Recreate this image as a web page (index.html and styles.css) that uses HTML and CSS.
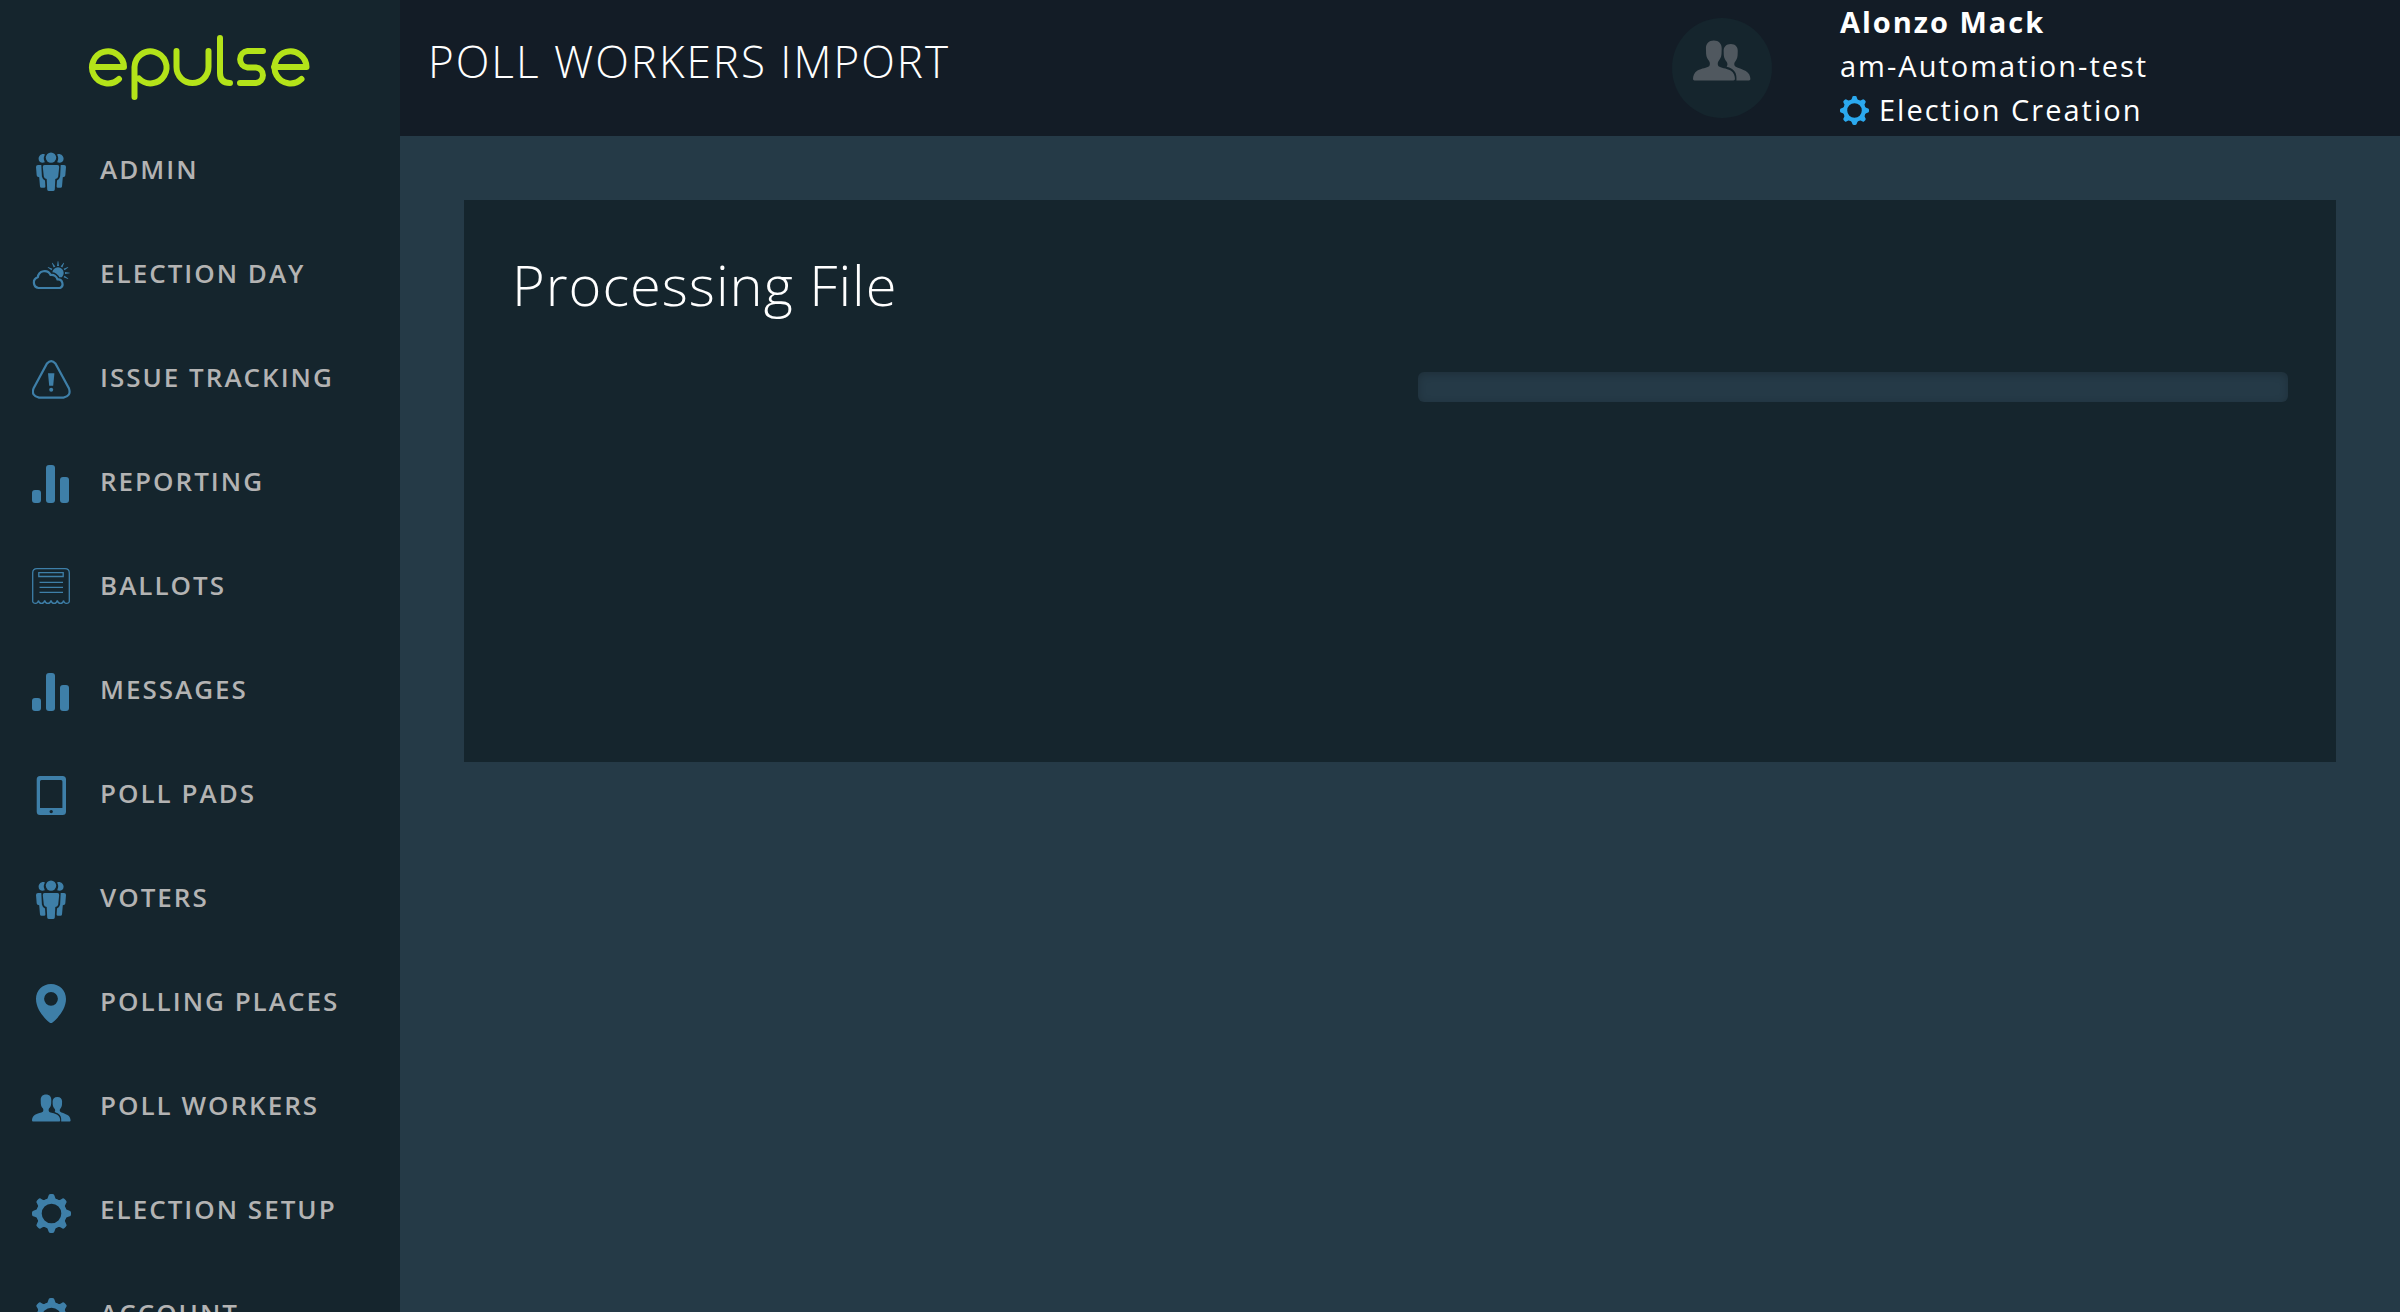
FILE: index.html
```html
<!DOCTYPE html>
<html lang="en">
<head>
<meta charset="utf-8">
<title>Poll Workers Import</title>
<link rel="stylesheet" href="styles.css">
</head>
<body>
<svg class="defs" width="0" height="0" aria-hidden="true">
  <symbol id="people" viewBox="0 0 40 44">
    <circle cx="19" cy="7.6" r="5.2"/>
    <path d="M12.6 4.2C9 3.4 6.6 6 6.6 8.700C6.600 11.500 9 13.300 12 12.600C12.600 12.300 12.800 11.600 12.400 10.900C11.500 9 11.600 7 12.600 5.200C12.900 4.700 12.900 4.400 12.600 4.200Z"/>
    <path d="M25.400 4.200C29 3.400 31.600 6 31.600 8.700C31.600 11.500 29 13.300 26 12.600C25.400 12.300 25.200 11.600 25.600 10.900C26.500 9 26.400 7 25.400 5.200C25.100 4.700 25.100 4.400 25.400 4.200Z"/>
    <path d="M12.500 15H25.500Q27.300 15 27.200 17L26.200 26.500Q25.800 28.700 23.300 29L22.800 39.500Q22.600 41 21 41H17Q15.400 41 15.200 39.500L14.700 29Q12.200 28.700 11.800 26.500L10.800 17Q10.700 15 12.500 15Z"/>
    <path d="M6 15H9.300L9.900 26.500Q10.200 28.700 13 30.500L13.400 36.500Q13.400 37.800 12 37.800H9.500Q8.200 37.800 8 36.500L7.200 27.200Q5 27 4.700 25.500L4 17Q4 15 6 15Z"/>
    <path d="M32 15H28.700L28.100 26.500Q27.800 28.700 25 30.500L24.600 36.500Q24.600 37.800 26 37.800H28.500Q29.800 37.800 30 36.500L30.800 27.200Q33 27 33.300 25.500L34 17Q34 15 32 15Z"/>
  </symbol>
  <symbol id="weather" viewBox="0 0 40 44">
    <circle cx="26" cy="19" r="5.700"/>
    <g id="rays">
      <path id="ray" d="M25.700 7.300H26.300L27 12H25Z"/>
      <use href="#ray" transform="rotate(-60 26 19)"/>
      <use href="#ray" transform="rotate(-30 26 19)"/>
      <use href="#ray" transform="rotate(30 26 19)"/>
      <use href="#ray" transform="rotate(60 26 19)"/>
      <use href="#ray" transform="rotate(90 26 19)"/>
      <use href="#ray" transform="rotate(120 26 19)"/>
    </g>
    <path class="cutout" d="M6.500 34A5.500 5.500 0 0 1 5.800 23.300A6.800 7 0 0 1 18.600 21A5.800 5.800 0 0 1 25.500 25.500A4.500 4.500 0 0 1 28 34Z"/>
    <path d="M6.500 34A5.500 5.500 0 0 1 5.800 23.300A6.800 7 0 0 1 18.600 21A5.800 5.800 0 0 1 25.500 25.500A4.500 4.500 0 0 1 28 34Z" fill="none" stroke="currentColor" stroke-width="2.200" stroke-linejoin="round"/>
  </symbol>
  <symbol id="warning" viewBox="0 0 40 44">
    <path d="M15 5.500Q19.200 .6 23.400 5.500L37 30.500Q39.500 38 31.500 39.600H7Q-1 38 1.500 30.500Z" fill="none" stroke="currentColor" stroke-width="2.200"/>
    <path d="M16 15.300H22.400L21.200 27.700H17.200Z"/>
    <circle cx="19.200" cy="31.800" r="2"/>
  </symbol>
  <symbol id="bars" viewBox="0 0 40 44">
    <rect x="0" y="28" width="9" height="13" rx="3"/>
    <rect x="14" y="3" width="9" height="38" rx="3"/>
    <rect x="28" y="15" width="9" height="26" rx="3"/>
  </symbol>
  <symbol id="ballot" viewBox="0 0 40 44">
    <g fill="none" stroke="currentColor" stroke-width="1.300">
      <path d="M.7 35.500V7Q.7 2.700 5 2.700H33Q37.300 2.700 37.300 7V35.500Q37 37.400 34.500 37.400Q32 37.400 31.600 34.500Q31 37.400 28.500 37.400Q26 37.400 25.300 34.500Q24.600 37.400 22.100 37.400Q19.700 37.400 19 34.500Q18.300 37.400 15.900 37.400Q13.400 37.400 12.700 34.500Q12 37.400 9.500 37.400Q7 37.400 6.400 34.500Q6 37.400 3.500 37.400Q1 37.400 .7 35.500Z"/>
      <path d="M6.800 6.700H31.200V10.500H6.800ZM7.500 16.300H31M7.500 21.400H31M7.500 26.400H31"/>
    </g>
  </symbol>
  <symbol id="tablet" viewBox="0 0 40 44">
    <path fill-rule="evenodd" d="M8 2H30.500Q34 2 34 5.500V37.500Q34 41 30.500 41H8Q4.700 41 4.700 37.500V5.500Q4.700 2 8 2ZM9.500 6Q8 6 8 7.500V34H30.400V7.500Q30.400 6 29 6ZM19.200 35.900A1.700 1.700 0 1 0 19.200 39.300A1.700 1.700 0 1 0 19.200 35.900Z"/>
  </symbol>
  <symbol id="pin" viewBox="0 0 40 44">
    <path fill-rule="evenodd" d="M19 2C27.500 2 34 8.500 34 17C34 27 26 36 20.500 40.500Q19 41.500 17.500 40.500C12 36 4 27 4 17C4 8.500 10.500 2 19 2ZM19 9.900A6.900 6.900 0 1 0 19 23.700A6.900 6.900 0 1 0 19 9.900Z"/>
  </symbol>
  <symbol id="workers" viewBox="0 8 39 27">
    <path d="M14 8C17.400 8 19.400 10.200 19.300 13.400L19.200 17C19 19.500 18.200 20.600 17.200 21.800C16.500 22.700 16.400 24.600 17.200 25.300C18.500 26.400 22.500 26.600 25.300 28.300C27.600 29.800 28.200 31.900 28.200 34Q28.200 35 27.200 35H1Q0 35 0 34C0 31.900 .7 29.800 3 28.300C5.800 26.600 9.500 26.400 10.800 25.300C11.600 24.600 11.500 22.700 10.800 21.800C9.800 20.600 9 19.500 8.800 17L8.700 13.400C8.600 10.200 10.600 8 14 8Z"/>
    <path d="M25.400 10.400C28.400 10.400 30.200 12.300 30.100 15L30 18C29.800 20.200 29.100 21.300 28.300 22.300C27.600 23.200 27.500 24.600 28.300 25.300C29.400 26.200 32.500 26.900 35.500 28.600C37.700 29.900 38.500 32 38.600 34Q38.600 35 37.600 35H29.200C29.500 31 28.700 28.500 25.700 26.800C24.600 26.200 23 25.900 22.600 25.500C23.400 24.800 23.300 23.200 22.600 22.300C21.700 21.200 21 20.200 20.700 18L20.600 15C20.600 12.300 22.400 10.400 25.400 10.400Z"/>
  </symbol>
  <symbol id="gear" viewBox="0 4 39 39">
    <circle cx="19.500" cy="23.500" r="12.500" fill="none" stroke="currentColor" stroke-width="5.400"/>
    <path id="tooth" d="M13.500 10.500Q16 9 16.400 6Q16.600 4 18.500 4H20.500Q22.400 4 22.600 6Q23 9 25.500 10.500Z"/>
    <use href="#tooth" transform="rotate(45 19.500 23.500)"/>
    <use href="#tooth" transform="rotate(90 19.500 23.500)"/>
    <use href="#tooth" transform="rotate(135 19.500 23.500)"/>
    <use href="#tooth" transform="rotate(180 19.500 23.500)"/>
    <use href="#tooth" transform="rotate(225 19.500 23.500)"/>
    <use href="#tooth" transform="rotate(270 19.500 23.500)"/>
    <use href="#tooth" transform="rotate(315 19.500 23.500)"/>
  </symbol>
</svg>
<div class="app">
  <aside class="sidebar">
    <a class="brand" href="#">
      <svg class="logo" viewBox="88 34 223 67" role="img" aria-label="epulse">
        <path d="M92 67H124A16 16 0 1 0 119 79"/>
        <path d="M134.500 97V67A16 16 0 1 1 139 78.500"/>
        <path d="M176.500 51V67A16 16 0 0 0 208.500 67V51"/>
        <path d="M220 38V73Q220 83 230 83"/>
        <path d="M263 51H247.500A8.300 8.300 0 0 0 247.500 67.500H256A7.800 7.800 0 0 1 256 83H240"/>
        <path d="M274 67H306.500A16 16 0 1 0 301.500 79"/>
      </svg>
    </a>
    <nav class="menu">
      <a href="#"><svg class="icon"><use href="#people"/></svg>Admin</a>
      <a href="#"><svg class="icon"><use href="#weather"/></svg>Election Day</a>
      <a href="#"><svg class="icon"><use href="#warning"/></svg>Issue Tracking</a>
      <a href="#"><svg class="icon"><use href="#bars"/></svg>Reporting</a>
      <a href="#"><svg class="icon"><use href="#ballot"/></svg>Ballots</a>
      <a href="#"><svg class="icon"><use href="#bars"/></svg>Messages</a>
      <a href="#"><svg class="icon"><use href="#tablet"/></svg>Poll Pads</a>
      <a href="#"><svg class="icon"><use href="#people"/></svg>Voters</a>
      <a href="#"><svg class="icon"><use href="#pin"/></svg>Polling Places</a>
      <a href="#"><svg class="icon icon-workers"><use href="#workers"/></svg>Poll Workers</a>
      <a href="#"><svg class="icon icon-gear"><use href="#gear"/></svg>Election Setup</a>
      <a href="#"><svg class="icon icon-gear"><use href="#gear"/></svg>Account</a>
    </nav>
  </aside>
  <div class="page">
    <header class="topbar">
      <h1>Poll Workers Import</h1>
      <div class="avatar"><svg><use href="#workers"/></svg></div>
      <div class="user">
        <strong>Alonzo Mack</strong>
        <span>am-Automation-test</span>
        <span class="mode"><svg><use href="#gear"/></svg>Election Creation</span>
      </div>
    </header>
    <main>
      <section class="card">
        <h2 id="status">Processing File</h2>
        <div class="columns">
          <progress value="0" max="100" aria-labelledby="status"></progress>
        </div>
      </section>
    </main>
  </div>
</div>
</body>
</html>
```
FILE: styles.css
```css
* { box-sizing: border-box; }

body {
  margin: 0;
  background: #253a47;
  color: #fff;
  font-family: "Open Sans", "Noto Sans", sans-serif;
  letter-spacing: 2px;
}

svg { fill: currentColor; flex: none; }
.defs { position: absolute; }

.app {
  display: flex;
  height: 100vh;
  overflow: hidden;
}

.sidebar {
  flex: none;
  width: 400px;
  overflow: hidden;
  background: #15252d;
}

.brand {
  display: flex;
  justify-content: center;
  padding: 34px 2px 0 0;
  height: 120px;
  color: #b3e319;
}

.logo {
  width: 223px;
  height: 67px;
  fill: none;
  stroke: currentColor;
  stroke-width: 6;
  stroke-linecap: round;
  stroke-linejoin: round;
}

.menu a {
  display: flex;
  align-items: flex-start;
  height: 104px;
  padding: 30px 0 0 32px;
  color: #b3b3b3;
  font-size: 26px;
  font-weight: 600;
  line-height: 38px;
  text-decoration: none;
  text-transform: uppercase;
}

.icon {
  width: 40px;
  height: 44px;
  margin-right: 28px;
  color: #3e7fa8;
}

.icon-workers,
.icon-gear {
  width: 39px;
  margin-right: 29px;
}

.icon-gear {
  height: 39px;
  margin-top: 4px;
}

.cutout {
  fill: #15252d;
  stroke: #15252d;
  stroke-width: 5;
}

.page {
  flex: 1;
  min-width: 0;
}

.topbar {
  display: flex;
  align-items: flex-start;
  height: 136px;
  background: #131c26;
}

h1, h2 {
  margin: 0;
  font-weight: 300;
}

h1 {
  flex: 1;
  padding: 31px 0 0 28px;
  font-size: 44px;
  line-height: 60px;
  text-transform: uppercase;
}

.avatar {
  display: flex;
  align-items: flex-start;
  justify-content: center;
  width: 100px;
  height: 100px;
  margin: 18px 68px 0 0;
  padding-top: 22px;
  border-radius: 50%;
  background: #15252d;
  color: #50585f;
}

.avatar svg {
  width: 58px;
  height: 41px;
}

.user {
  width: 28%;
  font-size: 29px;
  line-height: 44px;
}

.user strong, .user span { display: block; }
.user strong { font-weight: 700; }

.user .mode {
  display: flex;
  align-items: center;
  gap: 10px;
}

.mode svg {
  width: 29px;
  height: 29px;
  color: #2ba9ef;
}

main { padding: 64px; }

.card {
  min-height: 562px;
  padding: 48px;
  background: #15252d;
}

h2 {
  font-size: 56px;
  line-height: 72px;
  letter-spacing: 1px;
}

.columns {
  display: grid;
  grid-template-columns: 1fr 1fr;
  gap: 36px;
  padding-top: 52px;
}

progress {
  grid-column: 2;
  display: block;
  width: 100%;
  height: 30px;
  border: 0;
  border-radius: 6px;
  appearance: none;
  background: #253a47;
  box-shadow: inset 0 2px 8px rgba(0, 0, 0, 0.2);
}

progress::-webkit-progress-bar { background: transparent; }
progress::-webkit-progress-value { background: #2ba9ef; }
```
